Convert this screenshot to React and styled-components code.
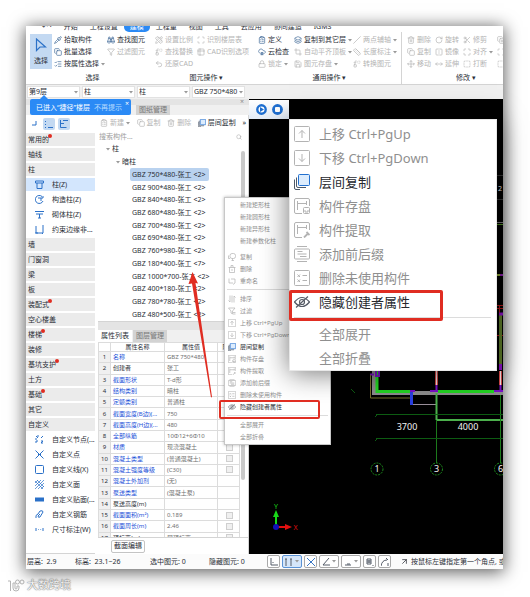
import React from 'react';
import styled, { createGlobalStyle } from 'styled-components';
import {
	ArrowUpRight,
	Binoculars,
	ClipboardList,
	CloudCog,
	Copy,
	CopyPlus,
	Crop,
	FlipHorizontal,
	Funnel,
	Layers,
	ListChecks,
	Lock,
	Maximize,
	Move,
	MoveHorizontal,
	PencilRuler,
	Pipette,
	Replace,
	RotateCw,
	Ruler,
	Save,
	Scan,
	Scissors,
	Search,
	Slash,
	SquareDashed,
	Table2,
	Trash2,
	Undo2,
} from 'lucide-react';

const colors = {
	blue: '#2b8af5',
	ink: '#2a2e36',
	link: '#1b50d8',
	muted: '#a0a0a0',
	line: '#d4d4d4',
	strip: '#e4e4e4',
	soft: '#f0f0f0',
	selected: '#c3d9f2',
	red: '#e02d22',
};

const GlobalStyle = createGlobalStyle`
	* {
		box-sizing: border-box;
	}
	body {
		margin: 0;
		background: #fff;
		color: ${colors.ink};
		font-family: 'Noto Sans', 'Noto Sans CJK SC', sans-serif;
		font-size: 7px;
		line-height: 10px;
	}
	button, input, select {
		margin: 0;
		padding: 0;
		border: 0;
		background: none;
		color: inherit;
		font: inherit;
	}
	ul {
		margin: 0;
		padding: 0;
		list-style: none;
	}
	svg {
		display: block;
		flex: none;
	}
`;

const Page = styled.div`
	padding: 26px 27px 4px 26px;
`;

const Window = styled.main`
	position: relative;
	background: #fff;
	box-shadow: 0 2px 16px 1px rgba(0, 0, 0, 0.65);
`;

const Clip = styled.div`
	overflow: hidden;
`;

/* ---------- ribbon ---------- */

const TabStrip = styled.nav`
	display: flex;
	align-items: flex-end;
	height: 6px;
	padding-left: 10px;
	overflow: hidden;
	white-space: nowrap;
`;

const StripTab = styled.a`
	flex: none;
	height: 10px;
	padding: 0 6px;
	border-radius: 5px;
	line-height: 10px;
	text-decoration: none;
	color: ${({ $active }) => ($active ? '#fff' : colors.ink)};
	background: ${({ $active }) => ($active ? colors.blue : 'transparent')};
`;

const Ribbon = styled.section`
	display: flex;
	height: 53px;
	padding-left: 4px;
	overflow: hidden;
	border-bottom: 1px solid ${colors.line};
`;

const Group = styled.div`
	flex: none;
	display: flex;
	flex-direction: column;
	padding-top: 2px;
	padding-left: ${({ $divided }) => ($divided ? '5px' : '0')};
	border-left: ${({ $divided }) => ($divided ? `1px solid ${colors.line}` : '0')};
`;

const GroupColumns = styled.div`
	display: flex;
`;

const GroupColumn = styled.div`
	width: ${({ $width }) => $width}px;
	display: grid;
	grid-auto-rows: 12px;
`;

const GroupLabel = styled.div`
	padding-top: 3px;
	text-align: center;
`;

const Command = styled.button`
	display: flex;
	align-items: center;
	gap: 2px;
	white-space: nowrap;
	color: ${({ $off }) => ($off ? '#b4b4b4' : colors.ink)};
	svg.icon {
		color: ${({ $off }) => ($off ? '#b4b4b4' : '#3d6696')};
	}
`;

const SelectButton = styled.button`
	display: flex;
	flex-direction: column;
	align-items: center;
	justify-content: center;
	gap: 4px;
	width: 22px;
	height: 35px;
	margin-right: 2px;
	background: ${colors.selected};
`;

const FilterBar = styled.div`
	display: flex;
	align-items: center;
	gap: 2px;
	height: 14px;
	padding: 1px;
	background: ${colors.soft};
`;

const FilterBox = styled.label`
	position: relative;
	display: flex;
	width: 53px;
	height: 12px;
	background: #fff;
	border: 1px solid #e2e2e2;
	select {
		width: 100%;
		padding-left: 1px;
		appearance: none;
	}
	svg {
		position: absolute;
		right: 1px;
		top: 4px;
	}
`;

/* ---------- body ---------- */

const Body = styled.div`
	display: flex;
`;

const Side = styled.div`
	flex: none;
	position: relative;
	width: 223px;
`;

const DockStrip = styled.div`
	display: flex;
	justify-content: flex-end;
	align-items: center;
	height: ${({ $height }) => $height}px;
	padding-right: 5px;
	background: ${colors.strip};
	color: #8a8a8a;
`;

const DockTabs = styled.div`
	display: flex;
	height: ${({ $height }) => $height}px;
	padding-left: ${({ $indent }) => $indent}px;
	gap: 1px;
	background: ${colors.soft};
`;

const DockTab = styled.button`
	padding: 0 3px;
	background: ${({ $active }) => ($active ? '#fff' : '#d3d3d3')};
	color: ${({ $active }) => ($active ? colors.ink : '#777')};
`;

const Hint = styled.div`
	position: absolute;
	left: 4px;
	top: 0;
	display: flex;
	align-items: center;
	justify-content: space-between;
	width: 101px;
	height: 16px;
	padding: 2px 9px 0 6px;
	border-radius: 2px;
	background: ${colors.blue};
	color: #fff;
	white-space: nowrap;
	&::before {
		content: '';
		position: absolute;
		left: 10px;
		top: -4px;
		border: 4px solid transparent;
		border-top: 0;
		border-bottom-color: ${colors.blue};
	}
	button {
		color: #b9dbff;
	}
	.close {
		position: absolute;
		right: 2px;
		top: 0;
		color: #fff;
	}
`;

const Panes = styled.div`
	display: flex;
	gap: 3px;
`;

const Nav = styled.nav`
	width: 69px;
	border-bottom: 1px solid ${colors.line};
`;

const NavTools = styled.div`
	display: flex;
	align-items: center;
	gap: 3px;
	height: 18px;
	padding-left: 2px;
`;

const NavTool = styled.button`
	display: grid;
	place-items: center;
	width: 12px;
	height: 12px;
	border-radius: 2px;
	background: ${({ $on }) => ($on ? colors.selected : 'transparent')};
`;

const NavGroup = styled.li`
	height: 13px;
	margin-bottom: 2px;
	padding-left: 2px;
	background: #ebebeb;
	line-height: 13px;
	span {
		position: relative;
	}
	span::after {
		content: '';
		display: ${({ $fresh }) => ($fresh ? 'block' : 'none')};
		position: absolute;
		right: -3px;
		top: -1px;
		width: 4px;
		height: 4px;
		border-radius: 50%;
		background: ${colors.red};
	}
`;

const NavItem = styled.li`
	display: flex;
	align-items: center;
	gap: 8px;
	height: 13px;
	margin-bottom: 2px;
	padding-left: 9px;
	white-space: nowrap;
	background: ${({ $on }) => ($on ? '#d3e6fd' : 'transparent')};
	overflow: hidden;
`;

const Work = styled.div`
	flex: 1;
	min-width: 0;
	border-right: 1px solid ${colors.line};
`;

const WorkTools = styled.div`
	display: flex;
	align-items: center;
	justify-content: space-between;
	height: 16px;
	padding: 0 2px;
`;

const SearchBox = styled.label`
	display: flex;
	align-items: center;
	justify-content: space-between;
	height: 12px;
	padding: 0 6px 0 1px;
	color: ${colors.muted};
	input {
		width: 100px;
	}
	input::placeholder {
		color: ${colors.muted};
		opacity: 1;
	}
`;

const Tree = styled.ul`
	position: relative;
	display: flex;
	flex-direction: column;
	height: 179px;
	border-bottom: 1px solid ${colors.line};
`;

const TreeRow = styled.li`
	flex: 1;
	display: flex;
	align-items: center;
	gap: 2px;
	margin-left: ${({ $level }) => [8, 18, 32][$level]}px;
	width: ${({ $level }) => ($level === 2 ? '79px' : 'auto')};
	padding-left: ${({ $level }) => ($level === 2 ? '2px' : '0')};
	border-radius: 2px;
	white-space: nowrap;
	background: ${({ $on }) => ($on ? '#b9d2ef' : 'transparent')};
`;

const ScrollThumb = styled.div`
	position: absolute;
	right: 3px;
	top: ${({ $top }) => $top}px;
	width: 4px;
	height: ${({ $height }) => $height}px;
	border-radius: 2px;
	background: #c9c9c9;
`;

const TableFrame = styled.div`
	position: relative;
	height: 196px;
	overflow: hidden;
	border-bottom: 1px solid ${colors.line};
`;

const PropTable = styled.table`
	width: 141px;
	height: 202px;
	table-layout: fixed;
	border-collapse: collapse;
	font-size: 6px;
	line-height: 8px;
	th, td {
		padding: 0 0 0 2px;
		border: 1px solid #dcdcdc;
		font-weight: 400;
		text-align: left;
		white-space: nowrap;
		overflow: hidden;
	}
	thead th {
		padding: 0;
		text-align: center;
	}
	tbody th {
		padding: 0;
		background: ${colors.soft};
		text-align: center;
	}
	td {
		color: #707070;
	}
`;

const PropName = styled.td`
	&& {
		color: ${({ $plain }) => ($plain ? colors.ink : colors.link)};
	}
`;

const Tick = styled.input`
	display: block;
	appearance: none;
	width: 7px;
	height: 7px;
	margin: 0 auto;
	border: 1px solid #cfcfcf;
	background: #f0f0f0;
`;

const PanelFoot = styled.div`
	display: flex;
	align-items: center;
	height: 16px;
	padding-left: 13px;
`;

const FootButton = styled.button`
	width: 34px;
	height: 13px;
	border: 1px solid #c4c4c4;
	border-radius: 2px;
`;

/* ---------- drawing area ---------- */

const Stage = styled.section`
	position: relative;
	flex: 1;
	min-width: 0;
	background: #000;
	overflow: hidden;
	> svg {
		width: 100%;
		height: auto;
	}
`;

const PlayBar = styled.div`
	position: absolute;
	left: 0;
	top: 1px;
	display: flex;
	gap: 5px;
	padding: 4px 6px 4px 7px;
	background: linear-gradient(#fff, #e3ecf7);
`;

/* ---------- menus ---------- */

const Menu = styled.div`
	position: absolute;
	left: ${({ $large }) => ($large ? 263 : 198)}px;
	top: ${({ $large }) => ($large ? 93 : 171)}px;
	width: ${({ $large }) => ($large ? 208 : 107)}px;
	padding: ${({ $large }) => ($large ? '2px 0 0' : '1px 0')};
	background: #fff;
	border: 1px solid ${({ $large }) => ($large ? '#e8e8e8' : '#c8c8c8')};
	box-shadow: ${({ $large }) => ($large ? '0 2px 26px rgba(0, 0, 0, 0.55)' : '0 0 3px rgba(0, 0, 0, 0.3)')};
	font-size: ${({ $large }) => ($large ? 13 : 6)}px;
`;

const MenuItem = styled.button`
	display: grid;
	grid-template-columns: ${({ $large }) => ($large ? '16px auto' : '8px auto')};
	justify-content: start;
	align-items: center;
	column-gap: ${({ $large }) => ($large ? 9 : 4)}px;
	width: 100%;
	height: ${({ $large }) => ($large ? 24 : 12)}px;
	padding-left: ${({ $large }) => ($large ? 4 : 3)}px;
	text-align: left;
	white-space: nowrap;
	color: ${({ $on }) => ($on ? '#26282e' : '#8f8f8f')};
	span {
		grid-column: 2;
	}
`;

const MenuRule = styled.hr`
	height: 1px;
	margin: ${({ $large }) => ($large ? '3px 5px 4px 4px' : '2px 2px 3px')};
	border: 0;
	background: #dcdcdc;
`;

const MenuGap = styled.div`
	height: 4px;
`;

const Marker = styled.div`
	position: absolute;
	left: ${({ $large }) => ($large ? 263 : 193)}px;
	top: ${({ $large }) => ($large ? 264 : 374)}px;
	width: ${({ $large }) => ($large ? 154 : 101)}px;
	height: ${({ $large }) => ($large ? 31 : 19)}px;
	border: ${({ $large }) => ($large ? 3 : 2)}px solid ${colors.red};
	border-radius: 2px;
	pointer-events: none;
`;

const Pointer = styled.svg`
	position: absolute;
	left: 160px;
	top: 245px;
	pointer-events: none;
`;

/* ---------- status bar ---------- */

const StatusBar = styled.footer`
	display: flex;
	align-items: center;
	height: 15px;
	padding-left: 1px;
	background: #fbfbfb;
	overflow: hidden;
	white-space: nowrap;
`;

const Stat = styled.div`
	flex: none;
	width: ${({ $width }) => $width}px;
`;

const SnapButton = styled.button`
	flex: none;
	display: flex;
	align-items: center;
	justify-content: center;
	gap: 2px;
	width: ${({ $wide }) => ($wide ? 20 : 13)}px;
	height: 13px;
	margin-right: 2px;
	border: 1px solid ${({ $on }) => ($on ? '#5b93d6' : '#a9a9a9')};
	border-radius: 2px;
	background: ${({ $on }) => ($on ? '#d5e6fa' : '#fff')};
`;

const Tip = styled.div`
	display: flex;
	align-items: center;
	gap: 2px;
	padding-left: 7px;
`;

const Brand = styled.div`
	display: flex;
	align-items: center;
	gap: 2px;
	margin: 8px 0 0 -19px;
	color: #fff;
	font-size: 11px;
	line-height: 16px;
	text-shadow: 0 0 1px #888, 0 0 1px #888, 0 0 2px #aaa;
`;

/* ---------- data ---------- */

const stripTabs = ['↶ ·', '开始', '工程设置', '建模', '工程量', '视图', '工具', '云应用', '协同建造', 'IGMS'];

const ribbonGroups = [
	{
		label: '选择',
		select: true,
		columns: [
			{ width: 53, items: [[Pipette, '拾取构件'], [Copy, '批量选择'], [ListChecks, '按属性选择', 0, 1]] },
			{ width: 48, items: [[Binoculars, '查找图元'], [Funnel, '过滤图元', 1]] },
		],
	},
	{
		label: '图元操作',
		more: true,
		columns: [
			{ width: 42, items: [[PencilRuler, '设置比例', 1], [Replace, '查找替换', 1], [Undo2, '还原CAD', 1]] },
			{ width: 61, items: [[Scan, '识别楼层表', 1], [Table2, 'CAD识别选项', 1]] },
		],
	},
	{
		label: '通用操作',
		more: true,
		columns: [
			{ width: 36, items: [[ClipboardList, '定义'], [CloudCog, '云检查'], [Lock, '锁定', 1, 1]] },
			{ width: 59, items: [[Layers, '复制到其它层', 0, 1], [Crop, '自动平齐顶板', 1, 1], [Save, '图元存盘', 1, 1]] },
			{ width: 48, items: [[Slash, '两点辅轴', 1, 1], [Ruler, '长度标注', 1, 1], [Replace, '转换图元', 1]] },
		],
	},
	{
		label: '修改',
		more: true,
		divided: true,
		columns: [
			{ width: 28, items: [[Trash2, '删除', 1], [Copy, '复制', 1], [Move, '移动', 1]] },
			{ width: 28, items: [[RotateCw, '旋转', 1], [FlipHorizontal, '镜像', 1], [MoveHorizontal, '延伸', 1]] },
			{ width: 34, items: [[Scissors, '修剪', 1], [Maximize, '对齐', 1, 1], [SquareDashed, '打断', 1]] },
			{ width: 28, items: [[CopyPlus, '偏移', 1], [Scan, '合并', 1], [SquareDashed, '分割', 1]] },
		],
	},
];

const filters = [
	['楼层', '第9层'],
	['类别', '柱'],
	['类型', '柱'],
	['构件', 'GBZ 750*480'],
];

const navRows = [
	{ name: '常用的', fresh: true },
	{ name: '轴线' },
	{ name: '柱' },
	{ name: '柱(Z)', icon: 'column', on: true },
	{ name: '构造柱(Z)', icon: 'ring' },
	{ name: '砌体柱(Z)', icon: 'brick' },
	{ name: '约束边缘非...', icon: 'edge' },
	{ name: '墙' },
	{ name: '门窗洞' },
	{ name: '梁' },
	{ name: '板' },
	{ name: '装配式', fresh: true },
	{ name: '空心楼盖' },
	{ name: '楼梯', fresh: true },
	{ name: '装修' },
	{ name: '基坑支护', fresh: true },
	{ name: '土方' },
	{ name: '基础', fresh: true },
	{ name: '其它' },
	{ name: '自定义' },
	{ name: '自定义节点(...', icon: 'node' },
	{ name: '自定义点', icon: 'cross' },
	{ name: '自定义线(X)', icon: 'frame' },
	{ name: '自定义面', icon: 'hatch' },
	{ name: '自定义贴面(...', icon: 'facing' },
	{ name: '自定义钢筋', icon: 'rebar' },
	{ name: '尺寸标注(W)', icon: 'dims' },
];

const components = [
	'750*480-张工 <2>',
	'900*480-张工 <2>',
	'840*480-张工 <2>',
	'680*480-张工 <2>',
	'700*480-张工 <2>',
	'690*480-张工 <2>',
	'760*980-张工 <2>',
	'180*400-张工 <7>',
	'1000*700-张工 <2>',
	'400*180-张工 <2>',
	'780*780-张工 <2>',
	'480*500-张工 <2>',
];

const props = [
	['名称', 'GBZ 750*480'],
	['创建者', '张工'],
	['截面形状', 'T-d形'],
	['结构类别', '暗柱'],
	['定额类别', '普通柱'],
	['截面宽度(B边)(...', '750'],
	['截面高度(H边)(...', '480'],
	['全部纵筋', '10Φ12+6Φ10'],
	['材质', '现浇混凝土'],
	['混凝土类型', '(普通混凝土)'],
	['混凝土强度等级', '(C30)'],
	['混凝土外加剂', '(无)'],
	['泵送类型', '(混凝土泵)'],
	['泵送高度(m)', ''],
	['截面面积(m²)', '0.189'],
	['截面周长(m)', '2.46'],
	['顶标高(m)', '层顶标高'],
];
const plainProps = ['创建者', '泵送高度(m)', '顶标高(m)'];
const tickedRows = [9, 10, 11, 15, 16, 17];

const moveItems = [
	{ name: '上移 Ctrl+PgUp', icon: 'up' },
	{ name: '下移 Ctrl+PgDown', icon: 'down' },
	{ name: '层间复制', icon: 'layers', on: true },
	{ name: '构件存盘', icon: 'save' },
	{ name: '构件提取', icon: 'extract' },
	{ name: '添加前后缀', icon: 'affix' },
	{ name: '删除未使用构件', icon: 'unused' },
	{ name: '隐藏创建者属性', icon: 'hide', on: true },
	'rule',
	{ name: '全部展开' },
	{ name: '全部折叠' },
];

const smallItems = [
	{ name: '新建矩形柱' },
	{ name: '新建圆形柱' },
	{ name: '新建异形柱' },
	{ name: '新建参数化柱' },
	'gap',
	{ name: '复制', icon: 'copy' },
	{ name: '删除', icon: 'bin' },
	{ name: '重命名', icon: 'rename' },
	'rule',
	{ name: '排序', icon: 'sort' },
	{ name: '过滤', icon: 'filter' },
	...moveItems,
];

/* ---------- icons ---------- */

const Caret = () => (
	<svg width="4" height="3" viewBox="0 0 4 3">
		<path d="M0 0h4L2 2.5z" fill="#999" />
	</svg>
);

const menuShapes = {
	up: <><rect x="0.500" y="0.500" width="15" height="15" rx="1" /><path d="M8 12V4.500M5 7.500l3-3 3 3" /></>,
	down: <><rect x="0.500" y="0.500" width="15" height="15" rx="1" /><path d="M8 4v7.500M5 8.500l3 3 3-3" /></>,
	layers: (
		<>
			<rect x="4.500" y="0.500" width="11" height="11" rx="1" fill="#dcecfd" stroke="#2270cf" />
			<path d="M2.500 3.500V12q0 1.500 1.500 1.500h8M0.500 5.500V14q0 1.500 1.500 1.500H6" stroke="#4d5968" />
		</>
	),
	save: <><path d="M8 15.500H2q-1.500 0-1.500-1.500V2q0-1.500 1.500-1.500h12q1.500 0 1.500 1.500v6M3.500 3v9M4 5.500h9M12.500 3v4" /><rect x="9.500" y="9.500" width="6" height="6" rx="1" /><path d="M11 12v2h3v-2" /></>,
	extract: <><path d="M8 15.500H2q-1.500 0-1.500-1.500V2q0-1.500 1.500-1.500h12q1.500 0 1.500 1.500v6M3.500 3v9M4 5.500h9M12.500 3v4" /><path d="M10 15.500l4-4M12.500 10l3 3" strokeWidth="1.800" /></>,
	affix: <><path d="M3 0.500h10M3 15.500h10" /><rect x="0.500" y="3" width="15" height="10" rx="1" /><path d="M3.500 5.500h5M3.500 8h9M6 10.500h6.500" /></>,
	unused: <><rect x="0.500" y="0.500" width="15" height="15" rx="1" /><path d="M3.500 4.500l2.500 2.500M6 4.500L3.500 7M3.500 9.500L6 12M6 9.500L3.500 12M8.500 5.500H13M8.500 10.500H13" /></>,
	hide: (
		<g stroke="#565b66" strokeWidth="1.200">
			<path d="M0.500 8Q8-1 15.500 8 8 17 0.500 8z" />
			<circle cx="8" cy="8" r="2.500" />
			<path d="M2 13.500L14 2.500" />
		</g>
	),
	copy: <><rect x="4" y="1" width="11" height="10" rx="4" /><path d="M1 5v6h3M7 15h5M9 11v4" /></>,
	bin: <path d="M1 5h14M6 5V1h4v4M3 5v10h10V5M8 8v4" />,
	rename: <path d="M2 3v9h8M6 4h8v8l-4 3" />,
	sort: <path d="M4 1v13l-3-3M8 1v14M12 15V2l3 3" />,
	filter: <path d="M1 2h13L9 8v6l-3-2V8zM10 11h5M10 14h5" />,
};

const MenuIcon = ({ name, size }) => (
	<svg width={size} height={size} viewBox="0 0 16 16" fill="none" stroke="#b3b3b3" strokeWidth={size < 12 ? 1.4 : 1}>
		{menuShapes[name]}
	</svg>
);

const navShapes = {
	column: <path d="M0.500 1h8v2h-8zM2 3v5.500h5V3" />,
	ring: <path d="M7 1.500A4 4 0 1 0 8 6M3 3h3v3M8 1v2H6" />,
	brick: <path d="M0 1.500h9M1 4h7M4.500 4v4M3 8h3" />,
	edge: <path d="M1 1v7h7V0M0 8h3M7 8l1 1" />,
	node: <path d="M1 1l2 2M8 1L6 3M1 8V6h2M6 6h2L6 8h2M3 0v2M0 4h2" />,
	cross: <path d="M0.500 0.500l8 8M8.500 0.500l-8 8M3 4.500h3" />,
	frame: <rect x="0.500" y="0.500" width="8" height="8" rx="1" />,
	hatch: <path d="M0 3l3-3M0 6l6-6M0 9l9-9M3 9l6-6M6 9l3-3M0 1l8 8M2 0l7 7" strokeWidth="0.700" />,
	facing: <path d="M0 3h9v3H0zM0 4.500h5" fill="#2b71c8" />,
	rebar: <path d="M1 8q-1-3 2-4l2-3q3-1 3 1L5 7q-2 1-2-1l2-2" />,
	dims: <path d="M1 3v3M8 3v3M3 4.500h0.600M5.500 4.500h0.600" />,
};

const NavIcon = ({ name }) => (
	<svg width="9" height="9" viewBox="0 0 9 9" fill="none" stroke="#2b71c8" strokeWidth="1">
		{navShapes[name]}
	</svg>
);

const snaps = [
	{ path: 'M1 0v7h7M3 4v1' },
	{ path: 'M1 1v7M0 1h2M6 1v7M5 1h2', on: true, wide: true },
	{ path: 'M0 0l8 8M8 0L0 8', tone: '#3b78c4' },
	{ path: 'M7 0L1 7h7', wide: true },
	{ path: 'M1 7h6M3 6h3', wide: true },
	{ path: 'M1 1h4v5H1zM2 2v3M3 2v3M4 2v3M7 7v1' },
	{ path: 'M0 8Q1 2 6 2M5 0l2 2M7 5v3' },
];

/* ---------- parts ---------- */

const RibbonCommand = ({ item: [Icon, name, off, more] }) => (
	<Command $off={off} type="button">
		<Icon className="icon" size={8} />
		{name}
		{more ? <Caret /> : null}
	</Command>
);

const ContextMenu = ({ items, large }) => (
	<Menu $large={large}>
		{items.map((item, key) => {
			if (item === 'rule') return <MenuRule key={key} $large={large} />;
			if (item === 'gap') return <MenuGap key={key} />;
			return (
				<MenuItem key={key} type="button" $large={large} $on={item.on}>
					{item.icon && <MenuIcon name={item.icon} size={large ? 16 : 8} />}
					<span>{item.name}</span>
				</MenuItem>
			);
		})}
	</Menu>
);

const Plan = () => (
	<svg viewBox="249 99 254 455" fill="none">
		<g stroke="#333">
			<path d="M497 175.500h6M497 199.500h6" />
		</g>
		<path d="M497 222.500h6" stroke="#777" />
		<path d="M497 224.500h6" stroke="#4c8a22" />
		<path d="M497 275h3" stroke="#8fa63a" strokeWidth="2" />
		<path d="M500 275h3" stroke="#8a1fa8" strokeWidth="2" />
		<path d="M497 305.500h6M497 308.500h6M499.500 305v8M497 335.500h6" stroke="#b01818" />
		<path d="M500.500 315v50" stroke="#5f7d2a" strokeWidth="3" />
		<path d="M499 314h4M500.500 364v6" stroke="#8a12c4" strokeWidth="3" />

		<path d="M374 371v22h129" stroke="#8c8c8c" strokeWidth="4" />
		<path d="M377 371v20.500h34M438 391.500h56" stroke="#23d423" strokeWidth="3" />
		<path d="M376 371v5h3v-5M370 374.500h4" stroke="#7a10c8" strokeWidth="2" />
		<path d="M370.500 375v23h40" stroke="#77702c" />
		<path d="M411.500 391v14" stroke="#2a3fe0" strokeWidth="3" />
		<path d="M410 391h5M430 391h8M494 391h9M436.500 385v6M500.500 385v6" stroke="#7a10c8" strokeWidth="2" />
		<path d="M413 404.500h23" stroke="#9a8f9a" />
		<path d="M436.500 371v14M500.500 371v14" stroke="#d04848" strokeWidth="3" />
		<path d="M436.500 371v14M500.500 371v14" stroke="#f0dede" />
		<path d="M436.500 393v27M436 420h67" stroke="#4cb04c" strokeWidth="2" />
		<path d="M436.500 420v43M500.500 395v68" stroke="#1c7a1c" />
		<path d="M376 414.500h127M376 438.500h127M375 417l3-3M375 441l3-3M351 389l4 4" stroke="#0d5c12" />
		<g stroke="#1c8a1c" strokeDasharray="2 1">
			<circle cx="377" cy="469" r="6" />
			<circle cx="436.500" cy="469" r="6" />
			<circle cx="500.500" cy="469" r="6" />
		</g>
		<g fill="#f2f2f2" fontFamily="'Noto Sans', sans-serif" fontSize="9" textAnchor="middle">
			<text x="407" y="430">3700</text>
			<text x="468" y="430">4000</text>
			<text x="377" y="472">1</text>
			<text x="436.500" y="472">3</text>
			<text x="500.500" y="472">6</text>
			<text x="500" y="191" fontSize="7">2</text>
		</g>
		<path d="M276 526v-14" stroke="#18d818" strokeWidth="2" />
		<path d="M273 517l3-7 3 7z" fill="#18d818" />
		<path d="M277 527h10" stroke="#e01010" strokeWidth="2" />
		<path d="M285 524l7 3-7 3z" fill="#e01010" />
		<circle cx="276" cy="527" r="3" fill="#1010b8" />
		<g fontFamily="'Noto Sans', sans-serif" fontSize="7" textAnchor="middle">
			<text x="276" y="509" fill="#18d818">Y</text>
			<text x="295.500" y="530" fill="#e01010">X</text>
		</g>
	</svg>
);

const App = () => {
	return (
		<>
			<GlobalStyle />
			<Page>
				<Window>
					<Clip>
						<TabStrip>
							{stripTabs.map((name) => (
								<StripTab key={name} href="#" $active={name === '建模'}>
									{name}
								</StripTab>
							))}
						</TabStrip>
						<Ribbon>
							{ribbonGroups.map(({ label, select, more, divided, columns }) => (
								<Group key={label} $divided={divided}>
									<GroupColumns>
										{select && (
											<SelectButton type="button">
												<svg width="12" height="14" viewBox="0 0 12 14">
													<path d="M1.500 1v11.500l3.500-3.500h5.500z" fill="none" stroke="#2b71c8" strokeWidth="1.200" />
												</svg>
												选择
											</SelectButton>
										)}
										{columns.map(({ width, items }, key) => (
											<GroupColumn key={key} $width={width}>
												{items.map((item) => (
													<RibbonCommand key={item[1]} item={item} />
												))}
											</GroupColumn>
										))}
									</GroupColumns>
									<GroupLabel>
										{label}
										{more && ' ▾'}
									</GroupLabel>
								</Group>
							))}
						</Ribbon>
						<FilterBar>
							{filters.map(([label, value]) => (
								<FilterBox key={label}>
									<select aria-label={label} defaultValue={value}>
										<option>{value}</option>
									</select>
									<Caret />
								</FilterBox>
							))}
						</FilterBar>

						<Body>
							<Side>
								<DockStrip $height={6}>×</DockStrip>
								<DockTabs $height={10} $indent={110}>
									<DockTab type="button">图纸管理</DockTab>
								</DockTabs>
								<Hint>
									已进入“捷径”楼层
									<button type="button">不再提示</button>
									<button type="button" className="close">×</button>
								</Hint>
								<Panes>
									<Nav>
										<NavTools>
											<NavTool type="button" aria-label="收起">
												<svg width="6" height="6" viewBox="0 0 6 6" fill="none" stroke="#2b71c8">
													<path d="M5 0v4H1" />
												</svg>
											</NavTool>
											<NavTool type="button" $on aria-label="列表">
												<svg width="8" height="8" viewBox="0 0 8 8" fill="none" stroke="#2b71c8">
													<path d="M0 1.500h1M0 4.500h1M0 7.500h1M3 7.500h5" />
												</svg>
											</NavTool>
											<NavTool type="button" $on aria-label="树">
												<svg width="8" height="8" viewBox="0 0 8 8" fill="none" stroke="#2b71c8">
													<path d="M0.500 0v7.500h6M1 3.500h3M3 0.500h5" />
												</svg>
											</NavTool>
										</NavTools>
										<ul>
											{navRows.map(({ name, icon, on, fresh }) =>
												icon ? (
													<NavItem key={name} $on={on}>
														<NavIcon name={icon} />
														{name}
													</NavItem>
												) : (
													<NavGroup key={name} $fresh={fresh}>
														<span>{name}</span>
													</NavGroup>
												)
											)}
										</ul>
									</Nav>

									<Work>
										<WorkTools>
											<Command type="button" $off><ClipboardList className="icon" size={8} />新建<Caret /></Command>
											<Command type="button" $off><Copy className="icon" size={8} />复制</Command>
											<Command type="button" $off><Trash2 className="icon" size={8} />删除</Command>
											<Command type="button"><MenuIcon name="layers" size={8} />层间复制</Command>
											<Command type="button">»</Command>
										</WorkTools>
										<SearchBox>
											<input type="text" placeholder="搜索构件..." />
											<Search size={6} />
										</SearchBox>
										<Tree>
											<TreeRow $level={0}><Caret />柱</TreeRow>
											<TreeRow $level={1}><Caret />暗柱</TreeRow>
											{components.map((name, key) => (
												<TreeRow key={name} $level={2} $on={key === 0}>
													GBZ {name}
												</TreeRow>
											))}
											<ScrollThumb $top={8} $height={90} />
										</Tree>
										<DockStrip $height={8} />
										<DockTabs $height={12} $indent={0}>
											<DockTab type="button" $active>属性列表</DockTab>
											<DockTab type="button">图层管理</DockTab>
										</DockTabs>
										<TableFrame>
											<PropTable>
												<colgroup>
													<col width="12" />
													<col width="54" />
													<col width="53" />
													<col width="22" />
												</colgroup>
												<thead>
													<tr>
														<th />
														<th>属性名称</th>
														<th>属性值</th>
														<th>附加</th>
													</tr>
												</thead>
												<tbody>
													{props.map(([name, value], key) => (
														<tr key={name}>
															<th>{key + 1}</th>
															<PropName $plain={plainProps.includes(name)}>{name}</PropName>
															<td>{value}</td>
															<td>
																{tickedRows.includes(key + 1) && <Tick type="checkbox" aria-label={name} />}
															</td>
														</tr>
													))}
												</tbody>
											</PropTable>
											<ScrollThumb $top={60} $height={78} />
										</TableFrame>
										<PanelFoot>
											<FootButton type="button">截面编辑</FootButton>
										</PanelFoot>
									</Work>
								</Panes>
							</Side>

							<Stage>
								<Plan />
								<PlayBar>
									<button type="button" aria-label="播放">
										<svg width="11" height="11" viewBox="0 0 11 11">
											<circle cx="5.500" cy="5.500" r="4.200" fill="#fff" stroke="#1f6fd0" strokeWidth="2.400" />
											<path d="M4 3l4 2.500L4 8z" fill="#1f6fd0" />
										</svg>
									</button>
									<button type="button" aria-label="停止">
										<svg width="11" height="11" viewBox="0 0 11 11">
											<circle cx="5.500" cy="5.500" r="5.400" fill="#1f6fd0" />
											<rect x="3" y="3" width="5" height="5" rx="1" fill="#fff" />
										</svg>
									</button>
								</PlayBar>
							</Stage>
						</Body>

						<StatusBar>
							<Stat $width={48}>层高:&nbsp; 2.9</Stat>
							<Stat $width={75}>标高:&nbsp; 23.1~26</Stat>
							<Stat $width={59}>选中图元: 0</Stat>
							<Stat $width={58}>隐藏图元: 0</Stat>
							{snaps.map(({ path, on, wide, tone }) => (
								<SnapButton key={path} type="button" $on={on} $wide={wide}>
									<svg width="8" height="8" viewBox="0 0 8 8">
										<path d={path} fill="none" stroke={tone || '#555c68'} />
									</svg>
									{wide && <Caret />}
								</SnapButton>
							))}
							<Tip>
								<ArrowUpRight size={9} />
								按鼠标左键指定第一个角点, 或拾取构件图元
							</Tip>
						</StatusBar>
					</Clip>

					<ContextMenu items={smallItems} />
					<Pointer width="40" height="130" viewBox="186 271 40 130">
						<path d="M192.500 272l5.500 11.500-2.500-.5L212 397l-1 .5L192 283.500l-3.500.5z" fill={colors.red} />
					</Pointer>
					<ContextMenu items={moveItems} large />
					<Marker />
					<Marker $large />
				</Window>
				<Brand>
					<svg width="18" height="13" viewBox="0 0 18 13" fill="none" stroke="#b5b5b5" strokeWidth="1">
						<path d="M1 2h2.500v10M6 4v5q0 3 3 3t3-3V7h-2v2q0 1-1 1t-1-1V4z" />
						<circle cx="10.500" cy="3" r="2" />
						<circle cx="15" cy="3" r="2" />
					</svg>
					大数跨境
				</Brand>
			</Page>
		</>
	);
};

export default App;
